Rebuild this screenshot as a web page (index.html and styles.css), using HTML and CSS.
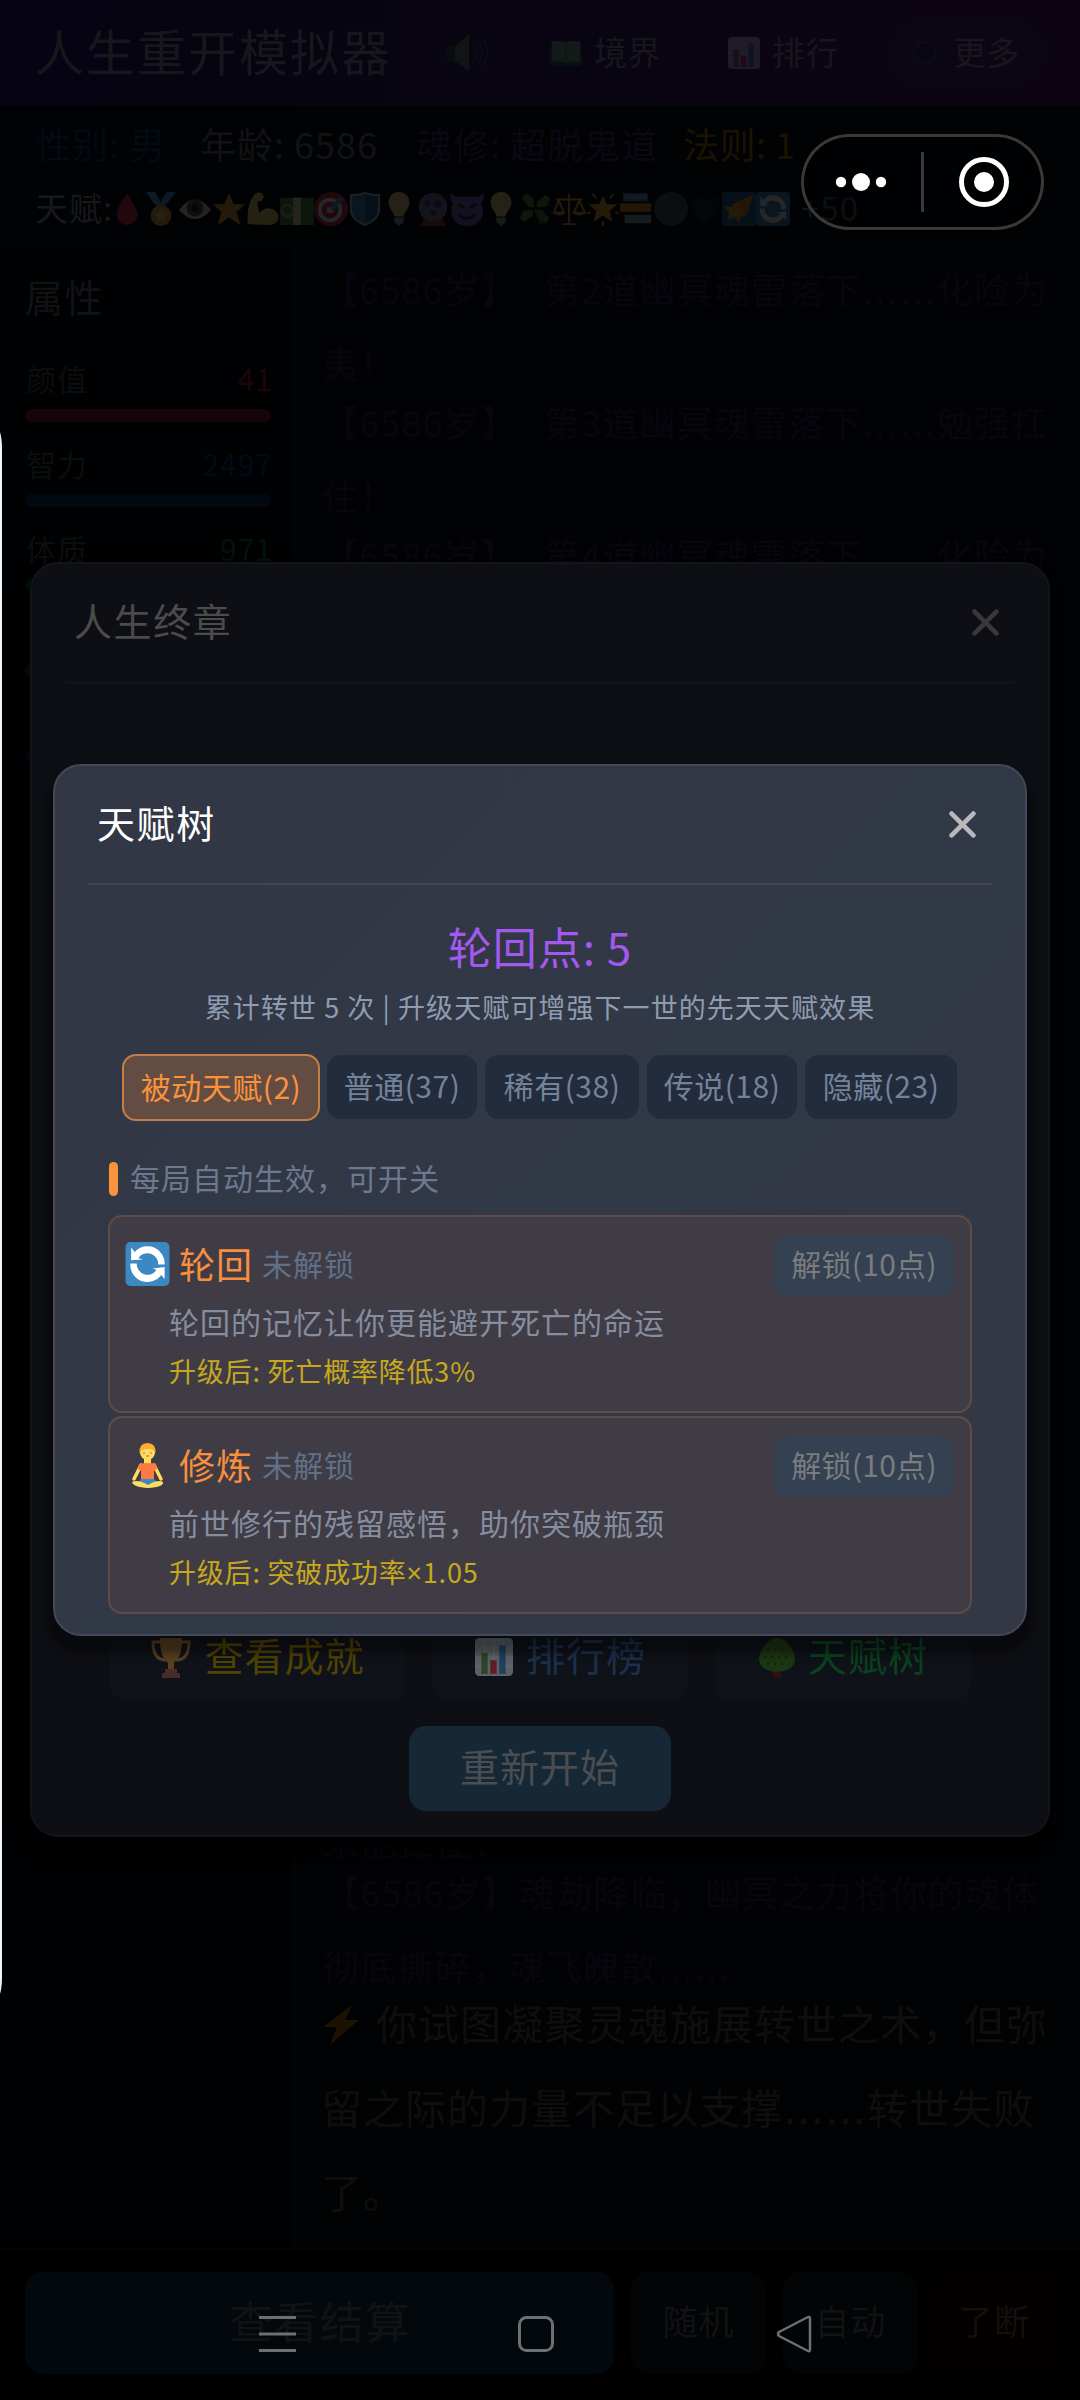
FILE: index.html
```html
<!DOCTYPE html>
<html lang="zh-CN">
<head>
<meta charset="utf-8">
<title>人生重开模拟器</title>
<link rel="stylesheet" href="styles.css">
</head>
<body>
<svg class="defs" width="0" height="0">
  <symbol id="cycle" viewBox="0 0 36 36"><rect width="36" height="36" rx="4" fill="#3b88c3"/><path d="M4 17.500h5.200a8.900 8.900 0 0 0 16.200 5.500l-3.200-1.300 9.800-1.200v9.800l-2.800-3.200A14 14 0 0 1 4 17.500zM32 18.500h-5.200a8.900 8.900 0 0 0-16.200-5.500l3.500 1.300L4.600 15V4.600l3 3.500A14 14 0 0 1 32 18.500z" fill="#fff"/></symbol>
  <symbol id="chart" viewBox="0 0 36 36"><rect width="36" height="36" rx="4" fill="#ccd6dd"/><path d="M0 9h36M0 18h36M0 27h36M9 0v36M18 0v36M27 0v36" stroke="#e1e8ed" stroke-width="2"/><path fill="#5c913b" d="M6 14h6v20H6z"/><path fill="#dd2e44" d="M14.500 21h6v13h-6z"/><path fill="#3b88c3" d="M23 7h6v27h-6z"/></symbol>
  <symbol id="bulb" viewBox="0 0 36 36"><path fill="#ffd983" d="M18 0C11 0 7 5 7 11c0 7 6 10 6 15h10c0-5 6-8 6-15 0-6-4-11-11-11z"/><path fill="#99aab5" d="M13 27h10v5l-5 4-5-4z"/></symbol>
</svg>

<div class="app">
  <header class="topbar">
    <h1 class="app-title">人生重开模拟器</h1>
    <div class="sound"><svg viewBox="0 0 41 38" width="41" height="38"><path fill="#090d0e" d="M0 12h8v15H0z"/><path fill="#101513" d="M8 12 22 0v38L8 27z"/><path d="M27 12q5 7 0 14M31 8q8 11 0 22M35 4q10 15 0 30" fill="none" stroke="#0c0c12" stroke-width="2"/></svg></div>
    <div class="top-item realm"><svg viewBox="0 0 32 26" width="32" height="26"><rect width="32" height="25" y="1" rx="3" fill="#06110f"/><path fill="#131a19" d="M2 2q8-3 14 1q6-4 14-1v20q-8-2-14 1q-6-3-14-1z"/><path d="M16 3v20" stroke="#0b100f"/></svg><span>境界</span></div>
    <div class="top-item rank"><svg width="32" height="32" opacity=".1"><use href="#chart"/></svg><span>排行</span></div>
    <div class="top-item more"><svg viewBox="0 0 32 32" width="32" height="32"><circle cx="16" cy="16" r="11" fill="none" stroke="#090c10" stroke-width="3"/><circle cx="16" cy="16" r="14" fill="none" stroke="#090c10" stroke-width="3" stroke-dasharray="4 7"/></svg><span>更多</span></div>
  </header>

  <section class="status">
    <div class="status-row"><span class="blue">性别: 男</span><span>年龄: 6586</span><span class="purple">魂修: 超脱鬼道</span><span class="gold">法则: 1</span></div>
    <div class="talents"><span class="talent-label">天赋:</span>
      <div class="emojis">
        <svg viewBox="0 0 36 36"><path fill="#dd2e44" d="M18 1C13 10 7 17 7 24a11 11 0 0 0 22 0C29 17 23 10 18 1z"/></svg>
        <svg viewBox="0 0 36 36"><path fill="#55acee" d="M2 0h10l8 15h-7zM24 0h10L22 15h-7z"/><circle cx="18" cy="25" r="11" fill="#ffac33"/><path fill="#ffd983" d="m18 17 2.500 5 5 1-4 4 1 5-4.500-3-4.500 3 1-5-4-4 5-1z"/></svg>
        <svg viewBox="0 0 36 36"><path fill="#e1e8ed" d="M1 19Q18-3 35 19Q18 38 1 19z"/><circle cx="18" cy="17" r="9" fill="#8a4b38"/><circle cx="18" cy="17" r="4" fill="#14171a"/></svg>
        <svg viewBox="0 0 36 36"><path fill="#ffac33" d="m18 1 5 12h12l-9 8 4 14-12-8-12 8 4-14-9-8h12z"/></svg>
        <svg viewBox="0 0 36 36"><path fill="#ffdc5d" d="M2 34Q0 14 9 2q7-4 10 3l-3 5h-4l2 12q7-7 14-4c10 5 8 16-3 17z"/></svg>
        <svg viewBox="0 0 36 36"><path fill="#5c913b" d="M0 6h36v29H0z"/><path fill="#ffe8b6" d="M14 6h8v29h-8z"/><circle cx="8" cy="20" r="6" fill="none" stroke="#a6d388" stroke-width="2"/></svg>
        <svg viewBox="0 0 36 36"><circle cx="18" cy="18" r="18" fill="#dd2e44"/><circle cx="17" cy="19" r="11" fill="none" stroke="#fff" stroke-width="4"/><circle cx="17" cy="19" r="3.500" fill="#fff"/><path d="m18 18 12-12" stroke="#55acee" stroke-width="5"/></svg>
        <svg viewBox="0 0 36 36"><path fill="#3b88c3" stroke="#ccd6dd" stroke-width="2" d="M18 1q8 3 15 2v15c0 8-7 14-15 17C10 32 3 26 3 18V3q7 1 15-2z"/><path fill="#226699" d="M18 3q7 2 13 2v13c0 7-6 12-13 15z"/></svg>
        <svg><use href="#bulb"/></svg>
        <svg viewBox="0 0 36 36"><path fill="#9b3b22" d="m8 28-4 8h28l-4-8z"/><circle cx="18" cy="16" r="15" fill="#8b78ad"/><g fill="#553986"><circle cx="12" cy="12" r="3"/><circle cx="23" cy="13" r="4"/><circle cx="18" cy="22" r="3"/></g></svg>
        <svg viewBox="0 0 36 36"><path fill="#9266cc" d="M1 0q1 6 10 5h14q9 1 10-5 2 8-2 12c6 13-2 24-15 24S-2 25 3 12Q-1 8 1 0z"/><path d="m8 13 7 4m13-4-7 4M9 24q9 8 18 0" fill="none" stroke="#292f33" stroke-width="3"/></svg>
        <svg><use href="#bulb"/></svg>
        <svg viewBox="0 0 36 36"><path fill="#5c913b" d="M17 16Q9 17 8 11 2 8 6 4q3-4 6 0 6 1 5 12zm3 0q-1-8 5-9 3-6 7-2 4 3 0 6 1 6-12 5zM16 19q1 8-5 9-3 6-7 2-4-3 0-6-1-6 12-5zm4 0q8-1 9 5 6 3 2 7-3 4-6 0-6-1-5-12z"/><path d="M18 18q3 9 7 17" fill="none" stroke="#3e721d" stroke-width="2.500"/></svg>
        <svg viewBox="0 0 36 36"><path d="M18 2v31M11 34h14M4 8h28M7 9 2 22h11L7 9m22 0-6 13h12L29 9" fill="none" stroke="#ffac33" stroke-width="2"/><path fill="#ffac33" d="M1 22h13q-6 6-13 0m21 0h13q-6 6-13 0"/></svg>
        <svg viewBox="0 0 36 36"><path fill="#ffac33" d="m18 4 4 9h11l-8 7 3 12-10-7-10 7 3-12-8-7h11z"/><path d="M18 31v5M1 23l4-2m30 2-4-2M7 2l4 5M29 2l-4 5" stroke="#ffac33" stroke-width="2"/></svg>
        <svg viewBox="0 0 36 36"><path fill="#3b88c3" d="M3 1h26v9H3z"/><path fill="#99aab5" d="M5 3h24v5H5zM5 24h28v9H5z"/><path fill="#f4900c" d="M0 12h33v9H0z"/></svg>
        <svg viewBox="0 0 36 36"><circle cx="18" cy="18" r="18" fill="#4a545c"/></svg>
        <svg viewBox="0 0 36 36"><path fill="#0c2112" d="M18 33Q0 20 3 10q7-10 15 0 8-10 15 0Q36 20 18 33z"/></svg>
        <svg viewBox="0 0 36 36"><rect width="36" height="36" rx="3" fill="#226699"/><path fill="#f4900c" d="M33 3 11 13l4 16 11-4z"/><path fill="#ffac33" d="m16 11 1 6 8 2-7 5 1 9-6-6-8 3 3-8-5-6h8z"/></svg>
        <svg><use href="#cycle"/></svg>
      </div><span class="plus">+50</span>
    </div>
  </section>

  <main class="main">
    <aside class="attrs">
      <h2>属性</h2>
      <div class="attr pink"><div><span>颜值</span><b>41</b></div><i></i></div>
      <div class="attr sky"><div><span>智力</span><b>2497</b></div><i></i></div>
      <div class="attr green"><div><span>体质</span><b>971</b></div><i></i></div>
      <div class="attr orange"><div></div><i></i></div>
      <div class="attr violet"><div></div><i></i></div>
    </aside>
    <div class="log">
      <div class="log-top">
        <p>【6586岁】<span class="gap"></span>第2道幽冥魂雷落下<span class="dots">……</span>化险为<br>夷！</p>
        <p>【6586岁】<span class="gap"></span>第3道幽冥魂雷落下<span class="dots">……</span>勉强扛<br>住！</p>
        <p>【6586岁】<span class="gap"></span>第4道幽冥魂雷落下<span class="dots">……</span>化险为</p>
      </div>
      <div class="log-end">
        <p class="one">未能扛住！</p>
        <p class="two">【6586岁】魂劫降临，幽冥之力将你的魂体<br>彻底撕碎，魂飞魄散<span class="dots">……</span></p>
        <p class="fail"><svg viewBox="0 0 36 40" width="36" height="40"><path fill="#1b1202" d="M29 0 0 22h14L7 40l29-25H22z"/></svg>你试图凝聚灵魂施展转世之术，但弥<br>留之际的力量不足以支撑<span class="dots">……</span>转世失败<br>了。</p>
      </div>
    </div>
  </main>

  <footer class="actions">
    <div class="act settle">查看结算</div><div class="act">随机</div><div class="act">自动</div><div class="act quit">了断</div>
  </footer>
</div>

<section class="modal ending">
  <div class="modal-head"><h2>人生终章</h2><svg class="close" viewBox="0 0 26 26"><path d="M2.500 2.500l21 21m0-21l-21 21"/></svg></div>
  <div class="ending-body">
    <div class="links">
      <div class="link yellow"><svg viewBox="0 0 40 40" width="40" height="40" opacity=".3"><path d="M10 4H2q0 18 13 18M30 4h8q0 18-13 18" fill="none" stroke="#ffac33" stroke-width="3"/><path fill="#ffac33" d="M9 0h22c0 16-3 20-8 25v8h-6v-8C12 20 9 16 9 0z"/><path fill="#c1694f" d="M14 31h12v4h3v5H11v-5h3z"/></svg><span>查看成就</span></div>
      <div class="link azure"><svg width="38" height="38" opacity=".4"><use href="#chart"/></svg><span>排行榜</span></div>
      <div class="link leaf"><svg viewBox="0 0 36 40" width="36" height="40"><path fill="#2d100e" d="M14 30h8v10h-8z"/><path fill="#1c3611" d="M18 0c10 0 18 14 18 21 0 17-36 17-36 0C0 14 8 0 18 0z"/><path d="M8 12h22M5 19h27M8 26h22" stroke="#10240b" stroke-width="2" stroke-dasharray="2 5"/></svg><span>天赋树</span></div>
    </div>
    <div class="restart">重新开始</div>
  </div>
</section>

<section class="modal tree">
  <div class="modal-head"><h2>天赋树</h2><svg class="close" viewBox="0 0 26 26"><path d="M2.500 2.500l21 21m0-21l-21 21"/></svg></div>
  <div class="points">轮回点: 5</div>
  <div class="summary">累计转世 5 次 | 升级天赋可增强下一世的先天天赋效果</div>
  <nav class="tabs">
    <div class="tab on">被动天赋(2)</div><div class="tab t2">普通(37)</div><div class="tab t3">稀有(38)</div><div class="tab t4">传说(18)</div><div class="tab t5">隐藏(23)</div>
  </nav>
  <div class="hint"><i></i><span>每局自动生效，可开关</span></div>
  <div class="cards">
    <article class="card">
      <div class="card-head"><svg class="icon" width="45" height="44"><use href="#cycle"/></svg><h3>轮回</h3><span class="state">未解锁</span><div class="unlock">解锁(10点)</div></div>
      <p class="desc">轮回的记忆让你更能避开死亡的命运</p>
      <p class="up">升级后: 死亡概率降低3%</p>
    </article>
    <article class="card">
      <div class="card-head"><svg class="icon" viewBox="0 0 45 45" width="45" height="45"><path d="M16 22 9 36M29 22l7 14" stroke="#ffdc5d" stroke-width="3.500" stroke-linecap="round"/><path fill="#ffdc5d" d="M19 14h7v7h-7z"/><path fill="#ff7a43" d="M14 21q8-2 17 0l1 5-3 2v9H16v-9l-3-2z"/><path fill="#3b88c3" d="M16 36h13l4 4-10 3-10-3z"/><path fill="#ffdc5d" d="M7 39q6-3 16 3 10-6 15-3 1 5-15 6-15-1-16-6z"/><circle cx="22.500" cy="9.500" r="7.500" fill="#ffdc5d"/><path fill="#ffac33" d="M14.500 10Q14 0 22.500 0T30.500 10Q28 5 22 6q-5 0-7.500 4z"/><path d="M18 10h2m5 0h2m-6 3h3" stroke="#c1694f"/></svg><h3>修炼</h3><span class="state">未解锁</span><div class="unlock">解锁(10点)</div></div>
      <p class="desc">前世修行的残留感悟，助你突破瓶颈</p>
      <p class="up">升级后: 突破成功率<span class="times">×</span>1.05</p>
    </article>
  </div>
</section>

<div class="capsule"><svg viewBox="0 0 243 96" width="243" height="96"><g fill="#fff"><circle cx="40" cy="48" r="5.200"/><circle cx="60" cy="48" r="9"/><circle cx="80" cy="48" r="5.200"/><circle cx="183" cy="48" r="10"/></g><path d="M121.500 18v60" stroke="#39393b" stroke-width="3"/><circle cx="183" cy="48" r="22.500" fill="none" stroke="#fff" stroke-width="5"/></svg></div>
<div class="edge"></div>
<svg class="sysnav" viewBox="0 0 560 42" width="560" height="42" fill="none" stroke="#6d7073" stroke-width="3"><path d="M4 4.500h37M4 21h37M4 37.500h37"/><rect x="264.500" y="4.500" width="33" height="33" rx="7"/><path stroke-width="2.500" stroke-linejoin="round" d="M553 4q2-1 2 2v30q0 3-2 2L524 23q-2-2 0-4z"/></svg>
</body>
</html>
```
FILE: styles.css
```css
* { box-sizing: border-box; margin: 0; padding: 0; }
body { width: 1080px; height: 2400px; overflow: hidden; position: relative; background: #000; color: #17181a; font-family: "Noto Sans CJK SC", sans-serif; font-size: 30px; letter-spacing: 1px; white-space: nowrap; }
h1, h2, h3, b { font-weight: 400; }
i { display: block; font-style: normal; }
.defs { position: absolute; }
svg { display: block; flex: none; }

.app { height: 2400px; display: flex; flex-direction: column; background: #010204; }
.topbar { height: 106px; padding-left: 35px; display: flex; align-items: center; background: linear-gradient(90deg, #060412, #080412 45%, #0d0413); color: #17161b; }
.app-title { width: 395px; font-size: 49px; letter-spacing: 2px; line-height: 100px; margin-top: -6px; }
.sound { width: 75px; height: 70px; border-radius: 37px; background: #090513; display: flex; align-items: center; justify-content: center; }
.top-item { height: 70px; display: flex; align-items: center; gap: 12px; font-size: 33px; letter-spacing: .5px; line-height: 66px; }
.top-item span { margin-top: -4px; }
.realm { margin-left: 45px; }
.rank { margin-left: 67px; }
.more { margin-left: 50px; padding: 0 26px 0 20px; border-radius: 35px; background: #0c0614; }

.status { height: 141px; padding: 16px 35px 0; border-bottom: 2px solid #030406; }
.status-row { height: 44px; display: flex; font-size: 36px; line-height: 42px; color: #111214; }
.status-row span:nth-child(1) { width: 165px; }
.status-row span:nth-child(2) { width: 216px; }
.status-row span:nth-child(3) { width: 267px; }
.status-row .blue { color: #020a14; }
.status-row .purple { color: #0d0613; }
.status-row .gold { color: #1b1301; letter-spacing: .5px; }
.talents { height: 36px; margin-top: 25px; display: flex; align-items: center; font-size: 33px; color: #17181a; }
.talent-label { width: 75px; }
.talent-label, .plus { line-height: 34px; margin-top: -4px; }
.emojis { display: flex; opacity: .14; }
.emojis svg { width: 34px; height: 34px; }
.plus { margin-left: 11px; color: #141517; }

.main { flex: 1; display: flex; min-height: 0; }
.attrs { width: 296px; padding: 24px 23px 0 25px; background: #000102; border-right: 2px solid #020305; }
.attrs h2 { font-size: 38px; letter-spacing: 1.500px; line-height: 50px; height: 83px; color: #111214; }
.attr { height: 85px; font-size: 30px; color: #0c0d0e; }
.attr div { display: flex; justify-content: space-between; height: 55px; line-height: 48px; margin-right: -2px; padding-left: 1px; }
.attr i { height: 13px; border-radius: 7px; }
.pink b { color: #1d050b; } .pink i { background: #16040b; }
.sky b { color: #020a17; } .sky i { background: #020812; }
.green b { color: #021406; } .green i { background: #021005; }
.orange i { background: #160b01; }
.violet i { background: #0b0415; }
.log { flex: 1; padding: 4px 0 0 27px; display: flex; flex-direction: column; justify-content: space-between; background: #010204; }
.log p { height: 133px; font-size: 36px; letter-spacing: 1.150px; line-height: 74px; color: #09050f; }
.log .dots { font-family: "DejaVu Sans", sans-serif; line-height: 1; }
.gap { display: inline-block; width: 26px; }
.log-top p { margin-left: -1px; }
.log .one { height: 51px; }
.log .two { height: 126px; }
.log-end { height: 445px; }
.log .fail { height: 253px; font-size: 41px; line-height: 84px; letter-spacing: 1px; color: #0e0e0c; margin-left: -2px; }
.fail svg { display: inline-block; margin: 0 17px 0 2px; vertical-align: -5px; }

.actions { height: 152px; padding: 22px 26px 26px 25px; border-top: 2px solid #030406; display: flex; gap: 17px; background: #000; }
.act { width: 135px; height: 102px; border-radius: 18px; background: #030405; font-size: 35px; line-height: 96px; text-align: center; color: #101214; }
.settle { width: 589px; background: #03080c; font-size: 44px; letter-spacing: 1.500px; }
.quit { width: 118px; background: #050000; color: #12100f; }

.modal { position: absolute; display: flex; flex-direction: column; border-radius: 28px; }
.modal-head { display: flex; justify-content: space-between; align-items: center; height: 120px; border-bottom: 3px solid; font-size: 38px; }
.modal-head h2 { font-size: 38px; letter-spacing: 1.600px; line-height: 60px; margin-top: -5px; }
.close { width: 27px; height: 27px; stroke: #b9b9bb; stroke-width: 4.500; stroke-linecap: round; }

.ending { left: 30px; top: 562px; width: 1020px; height: 1275px; padding: 0 33px; background: #0e0f14; border: 2px solid #131418; box-shadow: 0 12px 14px #000; }
.ending .modal-head { border-color: #131419; color: #4b4b4c; padding: 0 16px 0 9px; }
.ending .close { stroke: #38383a; }
.ending-body { flex: 1; display: flex; flex-direction: column; justify-content: flex-end; align-items: center; padding-bottom: 24px; }
.links { display: flex; gap: 27px; }
.link { width: 256px; height: 86px; border-radius: 18px; background: #0f1219; display: flex; justify-content: center; gap: 13px; padding-left: 2px; font-size: 39px; line-height: 79px; }
.link svg { margin-top: 23px; }
.link:first-child { width: 295px; }
.yellow { color: #504300; } .azure { color: #1b304c; } .leaf { color: #0a421e; }
.restart { width: 262px; height: 85px; margin-top: 25px; border-radius: 17px; background: #162835; color: #4a4e52; font-size: 39px; line-height: 79px; text-align: center; }

.tree { left: 53px; top: 764px; width: 974px; height: 872px; padding: 0 33px; background: linear-gradient(135deg, #333745, #313846 55%, #343844); border: 2px solid #454857; box-shadow: 0 12px 8px 6px rgba(0, 0, 0, .4); }
.tree .modal-head { height: 119px; color: #fff; border-width: 2px; border-color: #434554; padding: 0 16px 0 9px; }
.points { height: 70px; margin-top: 27px; font-size: 44px; line-height: 69px; text-align: center; color: #a259ee; }
.summary { height: 40px; font-size: 27px; letter-spacing: 1.070px; line-height: 50px; text-align: center; color: #8e9cb2; }
.tabs { display: flex; align-items: center; gap: 8px; width: 836px; height: 68px; margin: 31px 0 0 34px; font-size: 30px; letter-spacing: .5px; }
.tab { height: 64px; border-radius: 14px; background: #232c3c; color: #73839a; text-align: center; line-height: 61px; width: 150px; }
.tab.on { width: 198px; height: 67px; line-height: 60px; border: 2px solid #c47e46; background: #634d42; color: #fb923c; margin-right: -1px; }
.tab.t3 { width: 154px; } .tab.t5 { width: 152px; }
.hint { height: 34px; margin: 41px 0 19px 21px; display: flex; gap: 12px; font-size: 30px; line-height: 30px; color: #6c798f; }
.hint i { width: 9px; height: 34px; border-radius: 5px; background: #fb923c; }
.cards { display: flex; flex-direction: column; gap: 3px; padding: 0 20px; }
.card { height: 198px; padding: 18px 16px 0 15px; border: 2px solid #604c46; border-radius: 14px; background: #3f3c45; }
.card-head { height: 60px; display: flex; align-items: center; line-height: 56px; }
.card-head h3 { margin: -5px 0 0 9px; width: 83px; font-size: 36px; color: #f98e3e; }
.state { color: #607087; margin-top: -4px; }
.icon { margin-top: -2px; }
.unlock { width: 180px; height: 60px; margin-left: auto; border-radius: 14px; background: #334152; color: #7a7c7e; text-align: center; letter-spacing: .3px; line-height: 56px; }
.desc { margin: 1px 0 0 44px; height: 50px; line-height: 50px; color: #858d9f; }
.up { margin-left: 44px; height: 44px; line-height: 50px; font-size: 27px; letter-spacing: .8px; color: #c6a81f; }
.times { font-family: "Noto Sans", sans-serif; line-height: 1; }

.capsule { position: absolute; left: 801px; top: 134px; width: 243px; height: 96px; border-radius: 48px; background: rgba(0, 0, 0, .3); box-shadow: inset 0 0 0 3px #39393a; }
.edge { position: absolute; left: -8px; top: 424px; width: 10px; height: 1578px; border-radius: 0 8px 8px 0 / 0 24px 24px 0; background: #f2f3f4; }
.sysnav { position: absolute; left: 255px; top: 2313px; }
```
